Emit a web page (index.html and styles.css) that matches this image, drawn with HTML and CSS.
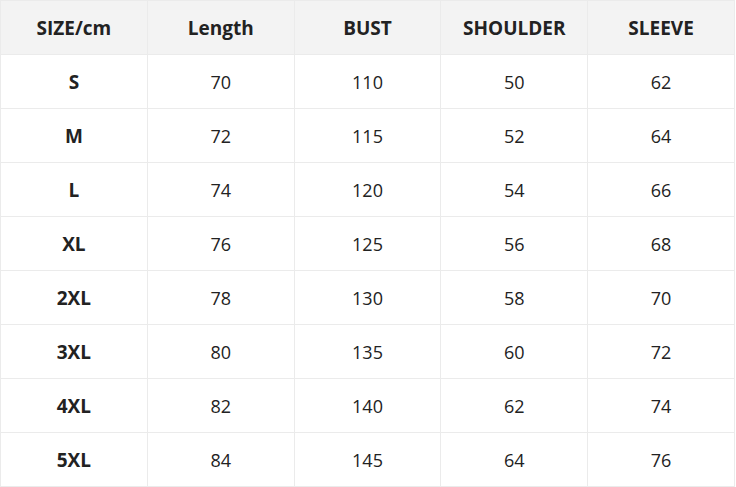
FILE: index.html
```html
<!DOCTYPE html>
<html>
<head>
<meta charset="utf-8">
<link rel="stylesheet" href="styles.css">
</head>
<body>
<table class="size-table">
  <thead>
    <tr><th>SIZE/cm</th><th>Length</th><th>BUST</th><th>SHOULDER</th><th>SLEEVE</th></tr>
  </thead>
  <tbody>
    <tr><th>S</th><td>70</td><td>110</td><td>50</td><td>62</td></tr>
    <tr><th>M</th><td>72</td><td>115</td><td>52</td><td>64</td></tr>
    <tr><th>L</th><td>74</td><td>120</td><td>54</td><td>66</td></tr>
    <tr><th>XL</th><td>76</td><td>125</td><td>56</td><td>68</td></tr>
    <tr><th>2XL</th><td>78</td><td>130</td><td>58</td><td>70</td></tr>
    <tr><th>3XL</th><td>80</td><td>135</td><td>60</td><td>72</td></tr>
    <tr><th>4XL</th><td>82</td><td>140</td><td>62</td><td>74</td></tr>
    <tr><th>5XL</th><td>84</td><td>145</td><td>64</td><td>76</td></tr>
  </tbody>
</table>
</body>
</html>
```
FILE: styles.css
```css
html, body {
  margin: 0;
  padding: 0;
  background: #fff;
}
.size-table {
  width: 735px;
  border-collapse: collapse;
  table-layout: fixed;
  font-family: "Open Sans", "Noto Sans", sans-serif;
  font-size: 18px;
  color: #222;
}
.size-table th,
.size-table td {
  border: 1px solid #ebebeb;
  height: 53px;
  padding: 0;
  text-align: center;
  vertical-align: middle;
}
.size-table th {
  font-size: 19px;
  font-weight: 700;
}
.size-table thead th {
  background: #f3f3f3;
}
.size-table td {
  font-weight: 400;
}
```
